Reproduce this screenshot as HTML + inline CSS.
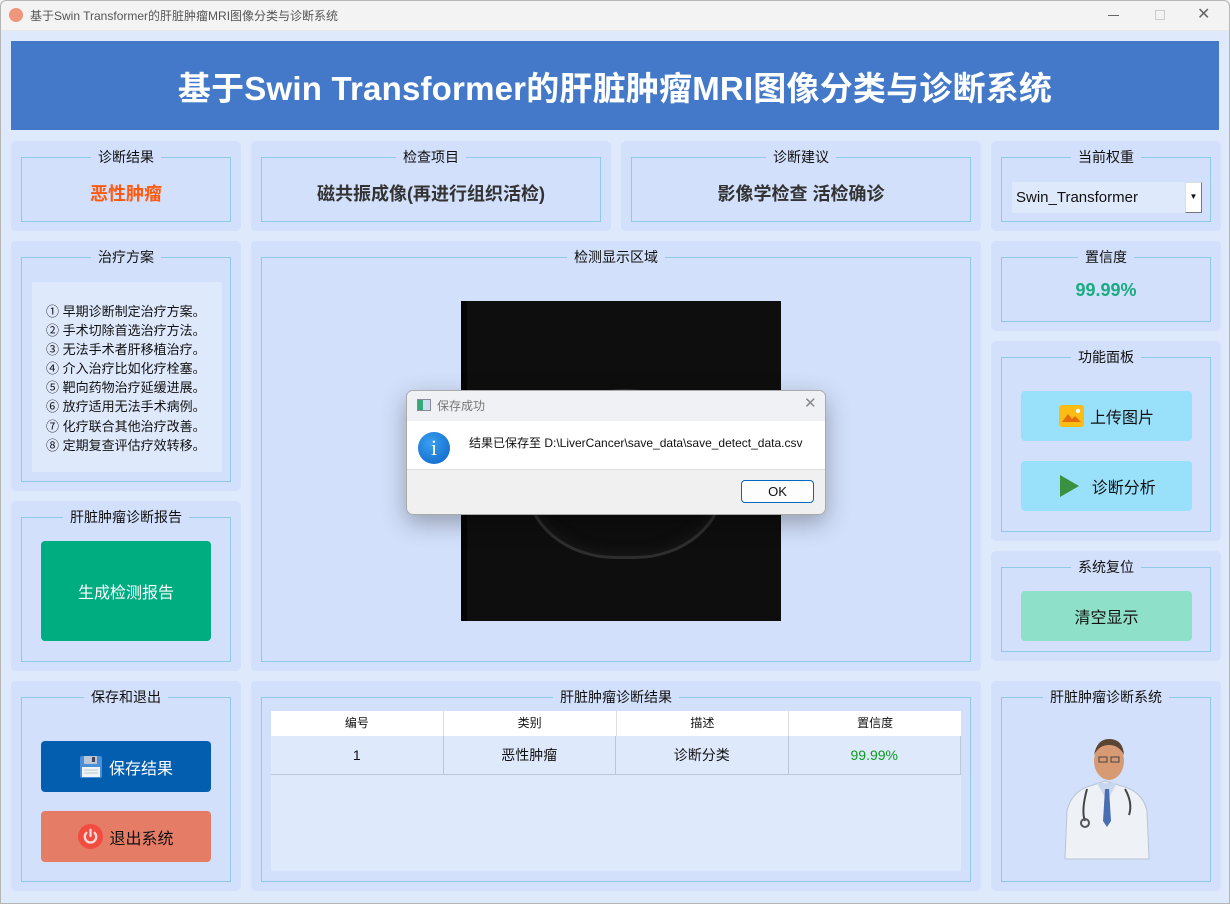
<!DOCTYPE html>
<html><head><meta charset="utf-8"><style>
*{margin:0;padding:0;box-sizing:border-box}
body{width:1230px;height:904px;overflow:hidden;background:#dfe9fc;font-family:"Liberation Sans","Noto Sans CJK SC",sans-serif;position:relative;color:#111}
.a{position:absolute}
.card{position:absolute;background:#d2e0fb;border-radius:5px}
.grp{position:absolute;border:1px solid #8ecae6}
.lg{position:absolute;top:-9px;left:0;right:0;text-align:center;font-size:14px;line-height:16px}
.lg span{background:#d2e0fb;padding:0 7px}
.val{position:absolute;left:0;right:0;text-align:center;font-weight:bold;font-size:18px}
.btn{position:absolute;border-radius:4px;display:flex;align-items:center;justify-content:center;font-size:16px;gap:6px}
</style></head><body>
<!-- title bar -->
<div class="a" style="left:0;top:0;width:1230px;height:31px;background:#f3f3f3;border-bottom:1px solid #e8e8e8"></div>
<div class="a" style="left:9px;top:8px;width:14px;height:14px;border-radius:50%;background:#f0967a"></div>
<div class="a" style="left:30px;top:7px;font-size:12px;color:#555">基于Swin Transformer的肝脏肿瘤MRI图像分类与诊断系统</div>
<div class="a" style="left:1108px;top:15px;width:11px;height:1px;background:#666"></div>
<div class="a" style="left:1155px;top:10px;width:10px;height:10px;border:1px solid #ccc"></div>
<div class="a" style="left:1197px;top:4px;font-size:16px;color:#666">✕</div>
<div class="a" style="left:0;top:0;width:1230px;height:904px;border:1px solid #b5b5b5;border-radius:6px 6px 0 0;pointer-events:none"></div>

<!-- header -->
<div class="a" style="left:11px;top:41px;width:1208px;height:89px;background:#4479c9;color:#fff;font-weight:bold;font-size:33px;text-align:center;line-height:95px;letter-spacing:0.2px">基于Swin Transformer的肝脏肿瘤MRI图像分类与诊断系统</div>

<!-- row1 -->
<div class="card" style="left:11px;top:141px;width:230px;height:90px"><div class="grp" style="left:10px;top:16px;width:210px;height:65px"><div class="lg"><span>诊断结果</span></div><div class="val" style="top:22px;color:#ff5a10">恶性肿瘤</div></div></div>
<div class="card" style="left:251px;top:141px;width:360px;height:90px"><div class="grp" style="left:10px;top:16px;width:340px;height:65px"><div class="lg"><span>检查项目</span></div><div class="val" style="top:22px;color:#333">磁共振成像(再进行组织活检)</div></div></div>
<div class="card" style="left:621px;top:141px;width:360px;height:90px"><div class="grp" style="left:10px;top:16px;width:340px;height:65px"><div class="lg"><span>诊断建议</span></div><div class="val" style="top:22px;color:#333">影像学检查 活检确诊</div></div></div>
<div class="card" style="left:991px;top:141px;width:230px;height:90px"><div class="grp" style="left:10px;top:16px;width:210px;height:65px"><div class="lg"><span>当前权重</span></div>
<div class="a" style="left:10px;top:24px;width:190px;height:31px;background:#dfe9fc;font-size:15px;line-height:31px;padding-left:4px">Swin_Transformer</div>
<div class="a" style="left:183px;top:24px;width:17px;height:31px;background:#fff;border:1px solid #777;border-top-color:#ddd;border-left-color:#ddd;font-size:8px;text-align:center;line-height:28px">▼</div></div></div>

<!-- treatment -->
<div class="card" style="left:11px;top:241px;width:230px;height:250px"><div class="grp" style="left:10px;top:16px;width:210px;height:225px"><div class="lg"><span>治疗方案</span></div>
<div class="a" style="left:10px;top:24px;width:190px;height:190px;background:#dfe9fc;font-size:13px;line-height:19.1px;padding:20px 0 0 14px">① 早期诊断制定治疗方案。<br>② 手术切除首选治疗方法。<br>③ 无法手术者肝移植治疗。<br>④ 介入治疗比如化疗栓塞。<br>⑤ 靶向药物治疗延缓进展。<br>⑥ 放疗适用无法手术病例。<br>⑦ 化疗联合其他治疗改善。<br>⑧ 定期复查评估疗效转移。</div></div></div>

<!-- report -->
<div class="card" style="left:11px;top:501px;width:230px;height:170px"><div class="grp" style="left:10px;top:16px;width:210px;height:145px"><div class="lg"><span>肝脏肿瘤诊断报告</span></div></div>
<div class="btn" style="left:30px;top:40px;width:170px;height:100px;background:#00ad80;color:#fff">生成检测报告</div></div>

<!-- save/exit -->
<div class="card" style="left:11px;top:681px;width:230px;height:210px"><div class="grp" style="left:10px;top:16px;width:210px;height:185px"><div class="lg"><span>保存和退出</span></div></div>
<div class="btn" style="left:30px;top:60px;width:170px;height:51px;background:#045eb0;color:#fff"><svg width="24" height="24" viewBox="0 0 24 24"><rect x="1" y="1" width="22" height="22" rx="2" fill="#4a8fd8"/><rect x="5" y="1" width="13" height="8" fill="#b8c8d8"/><rect x="13" y="2" width="3" height="5" fill="#445"/><rect x="3" y="12" width="18" height="10" fill="#f2f5f8"/><path d="M5 15h14M5 18h14" stroke="#bcc" /></svg>保存结果</div>
<div class="btn" style="left:30px;top:130px;width:170px;height:51px;background:#e57c66;color:#111"><svg width="25" height="25" viewBox="0 0 24 24"><circle cx="12" cy="12" r="12" fill="#f24b3f"/><path d="M8 8.5a5.5 5.5 0 1 0 8 0" fill="none" stroke="#fdd" stroke-width="2.2" stroke-linecap="round"/><path d="M12 5.5v6" stroke="#fdd" stroke-width="2.2" stroke-linecap="round"/></svg>退出系统</div></div>

<!-- detection -->
<div class="card" style="left:251px;top:241px;width:730px;height:430px"><div class="grp" style="left:10px;top:16px;width:710px;height:405px"><div class="lg"><span>检测显示区域</span></div></div>
<div class="a" style="left:210px;top:60px;width:320px;height:320px;background:#0e0e0e;border-left:6px solid #050505">
<div class="a" style="left:58px;top:88px;width:200px;height:170px;border-radius:50% 50% 45% 45%;border:3px solid #2e2e2e;box-shadow:0 0 14px #1c1c1c inset"></div></div></div>

<!-- table -->
<div class="card" style="left:251px;top:681px;width:730px;height:210px"><div class="grp" style="left:10px;top:16px;width:710px;height:185px"><div class="lg"><span>肝脏肿瘤诊断结果</span></div></div>
<div class="a" style="left:20px;top:30px;width:690px;height:160px;background:#dfe9fc"></div>
<div class="a" style="left:20px;top:30px;width:690px;height:25px;background:#fff;display:flex;font-size:12px;line-height:25px;text-align:center"><div style="flex:1;border-right:1px solid #ddd">编号</div><div style="flex:1;border-right:1px solid #ddd">类别</div><div style="flex:1;border-right:1px solid #ddd">描述</div><div style="flex:1">置信度</div></div>
<div class="a" style="left:20px;top:55px;width:690px;height:39px;display:flex;font-size:14px;line-height:39px;text-align:center;border-bottom:1px solid #bcc6d6"><div style="flex:1;border-right:1px solid #bcc6d6">1</div><div style="flex:1;border-right:1px solid #bcc6d6">恶性肿瘤</div><div style="flex:1;border-right:1px solid #bcc6d6">诊断分类</div><div style="flex:1;border-right:1px solid #bcc6d6;color:#0a9a20">99.99%</div></div></div>

<!-- confidence -->
<div class="card" style="left:991px;top:241px;width:230px;height:90px"><div class="grp" style="left:10px;top:16px;width:210px;height:65px"><div class="lg"><span>置信度</span></div><div class="val" style="top:22px;color:#1aab80">99.99%</div></div></div>

<!-- function panel -->
<div class="card" style="left:991px;top:341px;width:230px;height:200px"><div class="grp" style="left:10px;top:16px;width:210px;height:175px"><div class="lg"><span>功能面板</span></div></div>
<div class="btn" style="left:30px;top:50px;width:171px;height:50px;background:#99e0fa"><svg width="25" height="22" viewBox="0 0 25 22"><rect width="25" height="22" rx="3" fill="#fbbd14"/><path d="M3 17l6-8 4 5 3-3 6 6z" fill="#e46c0a"/><circle cx="19" cy="6" r="2.2" fill="#fff"/></svg>上传图片</div>
<div class="btn" style="left:30px;top:120px;width:171px;height:50px;background:#99e0fa"><svg width="24" height="24" viewBox="0 0 24 24"><path d="M3 1l19 11-19 11z" fill="#3a9140"/></svg>&nbsp;诊断分析</div></div>

<!-- reset -->
<div class="card" style="left:991px;top:551px;width:230px;height:110px"><div class="grp" style="left:10px;top:16px;width:210px;height:85px"><div class="lg"><span>系统复位</span></div></div>
<div class="btn" style="left:30px;top:40px;width:171px;height:50px;background:#8ee0c8">清空显示</div></div>

<!-- doctor -->
<div class="card" style="left:991px;top:681px;width:230px;height:210px"><div class="grp" style="left:10px;top:16px;width:210px;height:185px"><div class="lg"><span>肝脏肿瘤诊断系统</span></div></div>
<svg class="a" style="left:66px;top:50px" width="100" height="130" viewBox="0 0 100 130">
<path d="M8 128 L10 80 Q14 62 30 56 L48 50 L68 56 Q86 62 90 80 L92 128Z" fill="#eef2f7" stroke="#b8c4d4"/>
<path d="M40 52 L50 70 L60 52Z" fill="#c8d8ee"/><path d="M48 58 L52 58 L54 90 L50 96 L46 90Z" fill="#4a6fb0"/>
<path d="M30 58 Q24 80 28 90" fill="none" stroke="#444" stroke-width="2"/><circle cx="28" cy="92" r="4" fill="none" stroke="#555" stroke-width="2"/>
<path d="M68 58 Q76 72 72 84" fill="none" stroke="#444" stroke-width="2"/>
<ellipse cx="52" cy="30" rx="15" ry="19" fill="#d79a72"/><path d="M37 24 Q40 8 52 8 Q66 8 67 24 Q62 14 52 14 Q42 14 37 24Z" fill="#5a4535"/>
<rect x="42" y="26" width="8" height="5" fill="none" stroke="#444"/><rect x="54" y="26" width="8" height="5" fill="none" stroke="#444"/></svg></div>

<!-- dialog -->
<div class="a" style="left:406px;top:390px;width:420px;height:125px;border:1px solid #aaa;border-radius:7px;overflow:hidden;box-shadow:0 8px 24px rgba(0,0,0,0.3);background:#f0f0f0">
<div class="a" style="left:0;top:0;width:420px;height:30px;background:#f0f1f5"></div>
<div class="a" style="left:10px;top:8px;width:14px;height:12px;border:1px solid #889;background:linear-gradient(90deg,#3a7 0 40%,#cde 40%)"></div>
<div class="a" style="left:30px;top:6px;font-size:12px;color:#777">保存成功</div>
<div class="a" style="left:397px;top:3px;font-size:15px;color:#888">✕</div>
<div class="a" style="left:0;top:30px;width:420px;height:49px;background:#fff;border-bottom:1px solid #ddd"></div>
<div class="a" style="left:11px;top:41px;width:32px;height:32px;border-radius:50%;background:radial-gradient(circle at 40% 35%,#3aa0ee,#0a62c8);color:#fff;text-align:center;font-size:22px;line-height:32px;font-family:'Liberation Serif',serif">i</div>
<div class="a" style="left:62px;top:43px;font-size:12px">结果已保存至 D:\LiverCancer\save_data\save_detect_data.csv</div>
<div class="a" style="left:334px;top:89px;width:73px;height:23px;border:1px solid #0067c0;border-radius:4px;background:#fdfdfd;text-align:center;font-size:13px;line-height:21px">OK</div>
</div>
</body></html>
